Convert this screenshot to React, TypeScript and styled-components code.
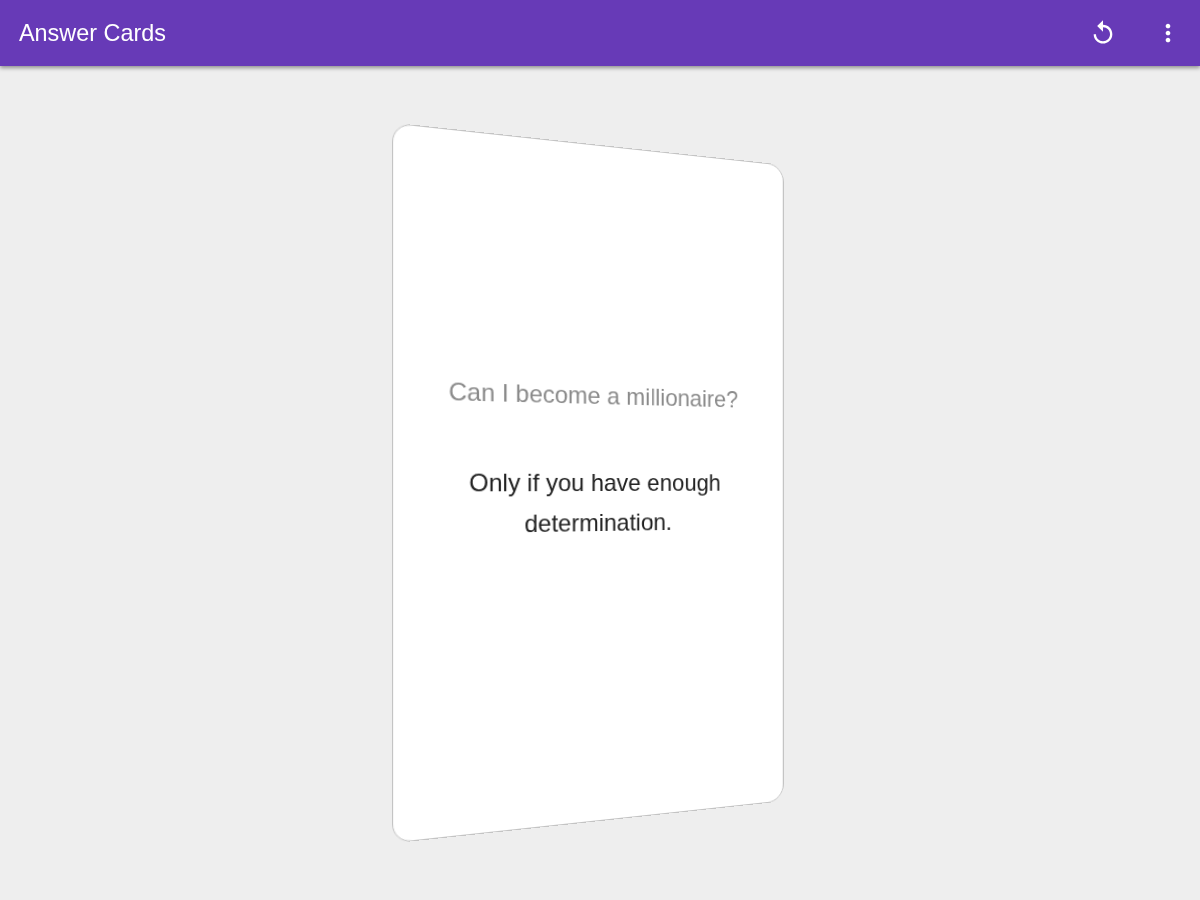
import React from "react";
import styled, { createGlobalStyle } from "styled-components";

const Global = createGlobalStyle`
  html, body { margin: 0; padding: 0; height: 100%; }
  body { background: #eeeeee; font-family: "Liberation Sans", Arial, sans-serif; }
`;

const Page = styled.div`
  display: flex;
  flex-direction: column;
  height: 100vh;
  overflow: hidden;
  filter: blur(0.6px);
`;

const AppBar = styled.header`
  display: flex;
  align-items: center;
  flex: 0 0 66px;
  padding-left: 19px;
  background: #673ab7;
  box-shadow: 0 2px 4px rgba(0, 0, 0, 0.4);
  position: relative;
  z-index: 1;
`;

const Title = styled.h1`
  flex: 1;
  margin: 0;
  font-size: 23.4px;
  font-weight: 400;
  color: #fff;
`;

const IconButton = styled.button`
  display: flex;
  align-items: center;
  justify-content: center;
  width: 65px;
  height: 66px;
  padding: 0;
  border: 0;
  background: none;
  color: #fff;
`;

const Stage = styled.main`
  flex: 1;
  display: flex;
  align-items: center;
  justify-content: center;
`;

const Card = styled.section`
  box-sizing: border-box;
  width: 402px;
  height: 676px;
  padding: 0 49px 48px;
  display: flex;
  flex-direction: column;
  align-items: center;
  justify-content: center;
  gap: 47px;
  background: #fff;
  border: 1px solid #c4c4c4;
  border-radius: 18px;
  transform: perspective(780px) rotateY(14deg);
  text-align: center;
`;

const Question = styled.p`
  margin: 0;
  font-size: 24px;
  line-height: 40px;
  color: #8a8a8a;
  white-space: nowrap;
`;

const Answer = styled.p`
  margin: 0;
  font-size: 24px;
  line-height: 40px;
  color: #212121;
`;

const Icon = ({ d }: { d: string }) => (
  <svg width="28" height="28" viewBox="0 0 24 24" fill="currentColor">
    <path d={d} />
  </svg>
);

export default function App() {
  return (
    <Page>
      <Global />
      <AppBar>
        <Title>Answer Cards</Title>
        <IconButton aria-label="Restart">
          <Icon d="M12 5V1L7 6l5 5V7c3.31 0 6 2.69 6 6s-2.69 6-6 6-6-2.69-6-6H4c0 4.42 3.58 8 8 8s8-3.58 8-8-3.58-8-8-8z" />
        </IconButton>
        <IconButton aria-label="More">
          <Icon d="M12 8c1.1 0 2-.9 2-2s-.9-2-2-2-2 .9-2 2 .9 2 2 2zm0 2c-1.1 0-2 .9-2 2s.9 2 2 2 2-.9 2-2-.9-2-2-2zm0 6c-1.1 0-2 .9-2 2s.9 2 2 2 2-.9 2-2-.9-2-2-2z" />
        </IconButton>
      </AppBar>
      <Stage>
        <Card>
          <Question>Can I become a millionaire?</Question>
          <Answer>Only if you have enough determination.</Answer>
        </Card>
      </Stage>
    </Page>
  );
}
